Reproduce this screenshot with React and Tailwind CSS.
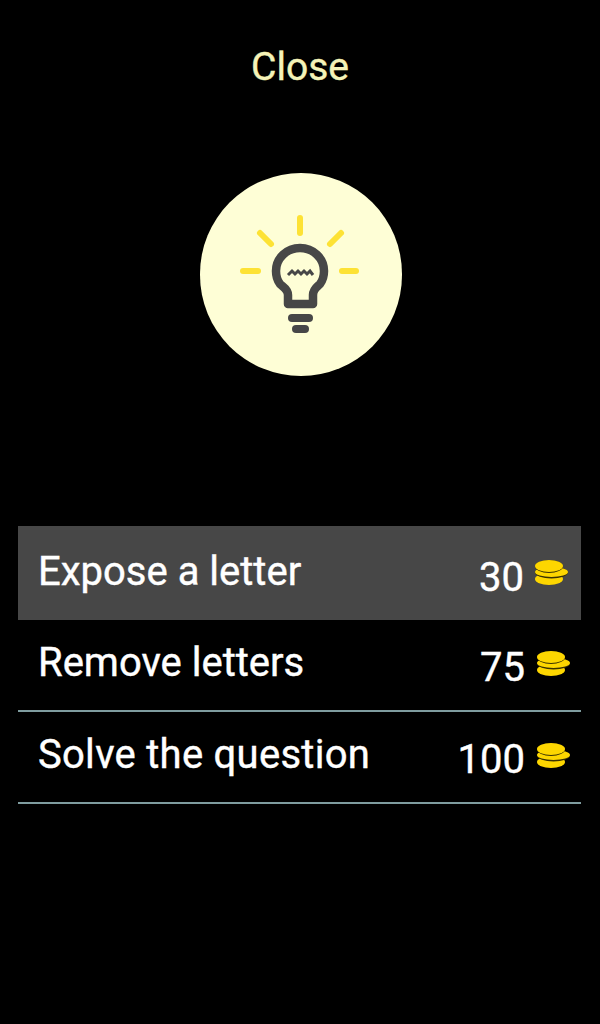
const Bulb = () => (
  <svg viewBox="0 0 202 203" className="block w-full h-full">
    <g stroke="#fde235" strokeWidth="6" strokeLinecap="round" fill="none">
      <line x1="100" y1="45" x2="100" y2="60" />
      <line x1="60" y1="60" x2="71" y2="71" />
      <line x1="130" y1="71" x2="141" y2="60" />
      <line x1="43" y1="98" x2="58" y2="98" />
      <line x1="142" y1="98" x2="156" y2="98" />
    </g>
    <g stroke="#474747" fill="none" strokeLinecap="round" strokeLinejoin="round">
      <path
        strokeWidth="8.5"
        d="M88 131 V122 C88 116 83 114 80 111 C77 107 76 103 76 98 C76 85 87 75 100 75 C113 75 124 85 124 98 C124 103 123 107 120 111 C117 114 113 116 113 122 V131 Z"
      />
      <path strokeWidth="3" strokeLinecap="butt" strokeLinejoin="miter" d="M88 102 L92 98 L95 101 L98 98 L101 101 L104 98 L107 101 L110 98 L113 102" />
      <line x1="92" y1="145" x2="109" y2="145" strokeWidth="8" />
      <line x1="96" y1="156" x2="105" y2="156" strokeWidth="8" />
    </g>
  </svg>
);

const Coins = () => (
  <svg viewBox="0 0 33 25" className="w-[33px] h-[25px] shrink-0">
    <ellipse cx="14" cy="19" rx="14" ry="6" fill="#fdd600" />
    <ellipse cx="16.5" cy="12.5" rx="16.5" ry="6" fill="#3a3200" />
    <ellipse cx="16.5" cy="12" rx="16.5" ry="5" fill="#fdd600" />
    <ellipse cx="14" cy="6.5" rx="14" ry="6.5" fill="#3a3200" />
    <ellipse cx="14" cy="6" rx="14" ry="6" fill="#fdd600" />
  </svg>
);

const options = [
  { label: "Expose a letter", cost: 30, active: true },
  { label: "Remove letters", cost: 75 },
  { label: "Solve the question", cost: 100, wide: true },
];

export default function App() {
  return (
    <div className="w-[600px] h-[1024px] bg-black overflow-hidden font-['Roboto',sans-serif] [-webkit-text-stroke:0.4px]">
      <div className="pt-[44px] h-[173px] text-center text-[39px] leading-[46px] text-[#f5f3b8]">Close</div>
      <div className="ml-[200px] w-[202px] h-[203px] rounded-full bg-[#fefed6]">
        <Bulb />
      </div>
      <div className="mt-[150px] ml-[18px] mr-[19px]">
        {options.map((o) => (
          <div
            key={o.label}
            className={
              o.active
                ? "h-[94px] flex bg-[#474747] pl-[20px] pr-[13px] text-white"
                : "h-[92px] flex border-b-2 border-[#7f9c9f] pl-[20px] pr-[11px] text-white"
            }
          >
            <div className={(o.active ? "flex-1 pt-[23px] text-[40px] leading-[46px]" : "flex-1 pt-[20px] text-[40px] leading-[46px]") + (o.wide ? " tracking-[0.28px]" : "")}>
              {o.label}
            </div>
            <div className={o.active ? "pt-[28px] text-[40px] leading-[48px]" : "pt-[24px] text-[40px] leading-[48px]"}>{o.cost}</div>
            <div className={o.active ? "pt-[34px] pl-[11px]" : "pt-[31px] pl-[12px]"}>
              <Coins />
            </div>
          </div>
        ))}
      </div>
    </div>
  );
}
